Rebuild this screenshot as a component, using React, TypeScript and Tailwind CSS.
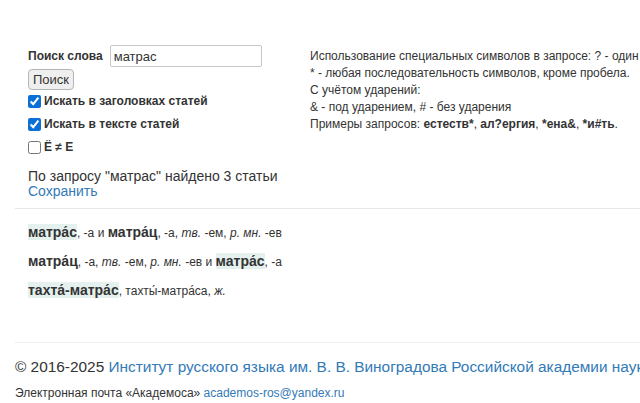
import React from "react";

function Hw({ children }: { children: React.ReactNode }) {
  return <b className="bg-[#e4f1ef] text-[14px] font-bold text-[#333]">{children}</b>;
}

export default function App() {
  return (
    <div className="h-[403px] w-[640px] overflow-hidden bg-white font-['Liberation_Sans',Arial,sans-serif] text-[#333]">
      <div className="flex pt-[45px]">
        <div className="w-[282px] shrink-0 pl-[28px]">
          <div className="flex items-center">
            <label className="text-[12px] font-bold">Поиск слова</label>
            <input
              defaultValue="матрас"
              className="ml-[7px] h-[22px] w-[152px] rounded-[2px] border border-[#c8c8c8] px-[3px] text-[13px] outline-none"
            />
          </div>
          <button className="mt-[2px] h-[21px] rounded-[4px] border border-[#b5b5b5] bg-[#efefef] px-[4px] text-[13px] leading-none">
            Поиск
          </button>
          <div className="mt-[3px] flex flex-col gap-[8px] text-[12px] font-bold leading-[15px]">
            <label className="flex items-center gap-[3px]">
              <input type="checkbox" defaultChecked className="m-0 h-[13px] w-[13px] accent-[#0b6fd8]" />
              Искать в заголовках статей
            </label>
            <label className="flex items-center gap-[3px]">
              <input type="checkbox" defaultChecked className="m-0 h-[13px] w-[13px] accent-[#0b6fd8]" />
              Искать в тексте статей
            </label>
            <label className="flex items-center gap-[3px]">
              <input type="checkbox" className="m-0 h-[13px] w-[13px]" />
              Ё ≠ Е
            </label>
          </div>
          <p className="mt-[14px] text-[14px] leading-[15px]">По запросу "матрас" найдено 3 статьи</p>
          <a className="block text-[14px] leading-[15px] text-[#337ab7]">Сохранить</a>
        </div>
        <div className="whitespace-nowrap pl-[28px] pt-[3px] text-[12px] leading-[17px]">
          <p>Использование специальных символов в запросе: ? - один символ,</p>
          <p>* - любая последовательность символов, кроме пробела.</p>
          <p>С учётом ударений:</p>
          <p>&amp; - под ударением, # - без ударения</p>
          <p>
            Примеры запросов: <b>естеств*</b>, <b>ал?ергия</b>, <b>*ена&amp;</b>, <b>*и#ть</b>.
          </p>
        </div>
      </div>

      <div className="ml-[15px] mt-[9px] border-t border-[#e8e8e8]" />

      <div className="flex flex-col gap-[8px] pl-[28px] pt-[13px] text-[12px] leading-[20px]">
        <p>
          <Hw>матра́с</Hw>, -а и <b className="text-[14px]">матра́ц</b>, -а, <i>тв.</i> -ем, <i>р. мн.</i> -ев
        </p>
        <p>
          <b className="text-[14px]">матра́ц</b>, -а, <i>тв.</i> -ем, <i>р. мн.</i> -ев и <Hw>матра́с</Hw>, -а
        </p>
        <p>
          <Hw>тахта́-матра́с</Hw>, тахты́-матра́са, <i>ж.</i>
        </p>
      </div>

      <div className="ml-[15px] mt-[41px] border-t border-[#eeeeee]" />

      <div className="whitespace-nowrap pl-[15px] pt-[15px]">
        <p className="text-[15.4px] leading-[17px]">
          © 2016-2025{" "}
          <a className="text-[#337ab7]">Институт русского языка им. В. В. Виноградова Российской академии наук</a>
        </p>
        <p className="mt-[11px] text-[12px] leading-[15px]">
          Электронная почта «Академоса» <a className="text-[#337ab7]">academos-ros@yandex.ru</a>
        </p>
      </div>
    </div>
  );
}
